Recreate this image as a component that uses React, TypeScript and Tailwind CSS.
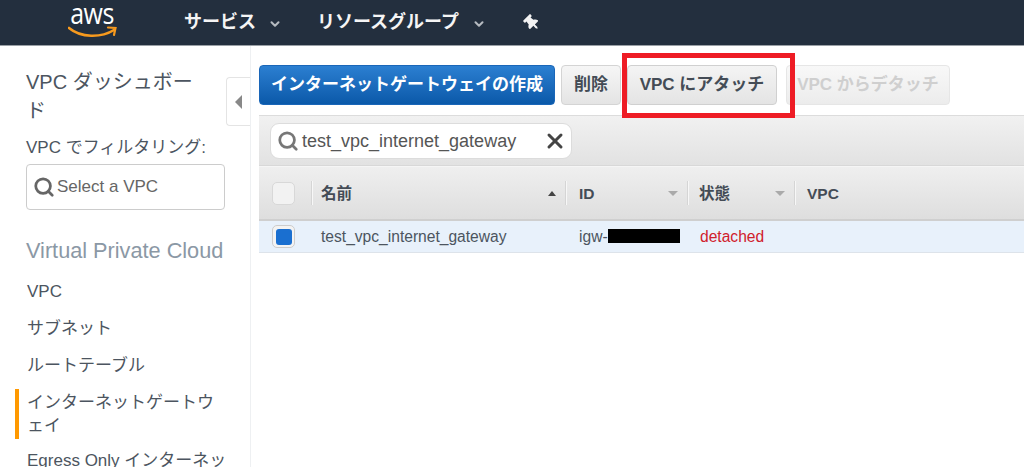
import { ChevronDown, Search, X } from "lucide-react";
import { FaThumbtack } from "react-icons/fa";

const font = "font-['Liberation_Sans','Noto_Sans_CJK_JP',sans-serif]";

function Divider() {
  return <span className="h-[24px] w-[2px] shrink-0 bg-[#f7f7f7] border-l border-[#d5d5d5]" />;
}

function SortArrow({ up = false }: { up?: boolean }) {
  return up ? (
    <span className="h-0 w-0 border-x-[4px] border-b-[5px] border-x-transparent border-b-[#444]" />
  ) : (
    <span className="h-0 w-0 border-x-[5px] border-t-[5px] border-x-transparent border-t-[#aaa]" />
  );
}

function HeaderCell({ label, className, arrow }: { label: string; className: string; arrow?: React.ReactNode }) {
  return (
    <div className={`flex h-full shrink-0 items-center justify-between pr-[9px] pt-[1px] ${className}`}>
      <span className="text-[15.5px] font-bold text-[#444c56]">{label}</span>
      {arrow}
    </div>
  );
}

function SideLink({ label, active = false }: { label: string; active?: boolean }) {
  return (
    <div className="relative pl-[27px] pr-[23px] text-[17px] leading-[23px] text-[#4c5560]">
      {active && <span className="absolute left-[15px] top-[-2px] h-[50px] w-[4px] bg-[#f90]" />}
      {label}
    </div>
  );
}

export default function App() {
  return (
    <div className={`relative flex h-[467px] w-[1024px] flex-col overflow-hidden bg-white ${font}`}>
      {/* Top nav */}
      <header className="flex h-[46px] shrink-0 items-center border-b border-[#9aa0a6] bg-[#232f3e] text-white">
        <div className="relative ml-[68px] flex h-full w-[48px] flex-col items-center">
          <span className="mt-[4px] origin-bottom scale-y-[1.2] font-['Open_Sans',sans-serif] text-[25px] leading-[20px] tracking-[-0.5px]">aws</span>
          <svg viewBox="0 0 50 14" className="absolute left-0 top-[25px] h-[14px] w-[50px]">
            <path d="M1 3 C 13 13, 33 13, 46 5" fill="none" stroke="#f79a1e" strokeWidth="2.6" strokeLinecap="round" />
            <path d="M40 2.5 L47.5 3 L46 10" fill="none" stroke="#f79a1e" strokeWidth="2.2" strokeLinecap="round" />
          </svg>
        </div>
        <span className="ml-[68px] text-[18px] font-bold text-[#f5f5f5]">サービス</span>
        <ChevronDown className="ml-[12px] mt-[3px] text-[#b5bac0]" size={14} strokeWidth={3.5} />
        <span className="ml-[35px] text-[18px] font-bold text-[#f5f5f5]">リソースグループ</span>
        <ChevronDown className="ml-[13px] mt-[3px] text-[#b5bac0]" size={14} strokeWidth={3.5} />
        <FaThumbtack className="ml-[38px] -rotate-45 text-[#f3f3f3]" size={16} />
      </header>

      <div className="flex min-h-0 flex-1">
        {/* Sidebar */}
        <aside className="relative w-[251px] shrink-0 border-r border-[#eef0f2] pt-[22px]">
          <div className="w-[205px] pl-[26px] text-[20px] leading-[29px] text-[#4c5560]">VPC ダッシュボード</div>
          <div className="mt-[10px] pl-[26px] text-[17px] leading-[24px] text-[#4c5560]">VPC でフィルタリング:</div>
          <div className="ml-[26px] mt-[4px] flex h-[46px] w-[199px] items-center gap-[2px] rounded border border-[#ccc] pl-[6px] text-[17px] text-[#666]">
            <Search size={22} strokeWidth={3} className="text-[#666]" />
            <span>Select a VPC</span>
          </div>
          <div className="mt-[26px] pl-[26px] text-[21.7px] leading-[30px] text-[#8b98a5]">Virtual Private Cloud</div>
          <div className="mt-[14px] flex flex-col gap-[14px]">
            <SideLink label="VPC" />
            <SideLink label="サブネット" />
            <SideLink label="ルートテーブル" />
            <SideLink label="インターネットゲートウェイ" active />
            <div className="-mt-[2px]">
              <SideLink label="Egress Only インターネットゲートウェイ" />
            </div>
          </div>
          {/* Collapse handle */}
          <div className="absolute right-0 top-[31px] flex h-[49px] w-[24px] items-center justify-center rounded-l border border-r-0 border-[#e4e4e4] bg-white">
            <span className="h-0 w-0 border-y-[7px] border-r-[7px] border-y-transparent border-r-[#888]" />
          </div>
        </aside>

        {/* Main */}
        <main className="min-w-0 flex-1 pl-[8px]">
          <div className="flex h-[70px] items-start gap-[6px] border-b border-[#dcdcdc] pt-[19px] text-[17px] font-bold">
            <button className="h-[40px] w-[296px] rounded-[4px] border border-[#1a66b8] bg-gradient-to-b from-[#2b7fd1] to-[#0a59a9] text-white">
              インターネットゲートウェイの作成
            </button>
            <button className="h-[40px] w-[60px] rounded-[4px] border border-[#d4d4d4] bg-gradient-to-b from-[#f6f6f6] to-[#e4e4e4] text-[#444c56]">
              削除
            </button>
            <button className="h-[40px] w-[150px] rounded-[4px] border border-[#d0d0d0] bg-gradient-to-b from-[#f4f4f4] to-[#e4e4e4] text-[#444c56]">
              VPC にアタッチ
            </button>
            <button className="ml-[3px] h-[40px] w-[164px] rounded-[4px] border border-[#e6e6e6] bg-gradient-to-b from-[#f8f8f8] to-[#ececec] text-[#cfcfcf]">
              VPC からデタッチ
            </button>
          </div>

          {/* Filter bar */}
          <div className="flex h-[50px] items-center border-b border-[#d8d8d8] bg-gradient-to-b from-[#f1f1f1] to-[#e2e2e2] pl-[11px] pt-[1px]">
            <div className="flex h-[36px] w-[302px] items-center rounded-[9px] border border-[#dcdcdc] bg-white pl-[6px] pr-[4px] text-[#555]">
              <Search size={22} strokeWidth={3} className="shrink-0 text-[#777]" />
              <span className="ml-[3px] flex-1 text-[18px]">test_vpc_internet_gateway</span>
              <X size={24} strokeWidth={3} className="shrink-0 text-[#444]" />
            </div>
          </div>

          {/* Table header */}
          <div className="flex h-[55px] items-center border-b-2 border-[#cfcfcf] border-t border-t-[#f5f5f5] bg-gradient-to-b from-[#efefef] to-[#dedede]">
            <div className="flex w-[52px] shrink-0 justify-start pl-[13px]">
              <span className="h-[23px] w-[23px] rounded-[5px] border border-[#d8d8d8] bg-[#f2f2f2]" />
            </div>
            <Divider />
            <HeaderCell label="名前" className="w-[252px] pl-[8px]" arrow={<SortArrow up />} />
            <Divider />
            <HeaderCell label="ID" className="w-[120px] pl-[12px]" arrow={<SortArrow />} />
            <Divider />
            <HeaderCell label="状態" className="w-[105px] pl-[10px]" arrow={<SortArrow />} />
            <Divider />
            <HeaderCell label="VPC" className="w-[100px] pl-[11px]" />
          </div>

          {/* Row */}
          <div className="flex h-[32px] items-center border-b border-[#dde3ea] bg-[#e8f1fb] text-[15.6px] text-[#4c5560]">
            <div className="flex w-[62px] shrink-0 pl-[13px]">
              <span className="flex h-[23px] w-[23px] items-center justify-center rounded-[5px] border border-[#ccc] bg-[#f3f3f3]">
                <span className="h-[16px] w-[16px] rounded-[3px] bg-[#1a6fd0]" />
              </span>
            </div>
            <span className="w-[258px] shrink-0">test_vpc_internet_gateway</span>
            <span className="flex w-[121px] shrink-0 items-center">
              igw-
              <span className="h-[14px] w-[72px] shrink-0 bg-black" />
            </span>
            <span className="text-[#d0202c]">detached</span>
          </div>
        </main>
      </div>

      {/* Red highlight */}
      <div className="absolute left-[622px] top-[53px] h-[65px] w-[173px] border-[5px] border-[#ee1c25]" />
    </div>
  );
}
